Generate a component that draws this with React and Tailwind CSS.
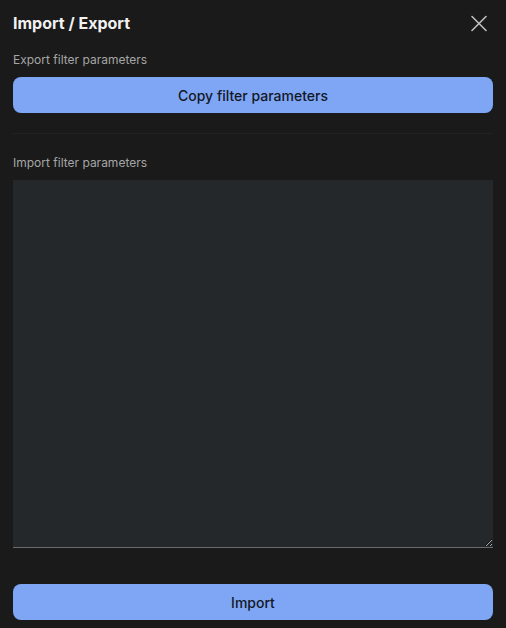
import { X } from 'lucide-react';

export default function App() {
    return (
        <div className="w-[506px] h-[628px] bg-[#1a1a1a] px-[13px] flex flex-col overflow-hidden" style={{ fontFamily: 'Inter, "Noto Sans", sans-serif' }}>
            {/* Header */}
            <div className="flex items-center justify-between h-[24px] mt-[11px]">
                <h2 className="text-[16px] font-bold text-[#f1f1f1] leading-[24px]">Import / Export</h2>
                <button className="text-[#bdbdbd] w-[28px] h-[28px] flex items-center justify-center">
                    <X className="w-[29px] h-[29px]" strokeWidth={1.4} />
                </button>
            </div>

            {/* Export */}
            <label className="mt-[17px] text-[12px] leading-[16px] text-[#a6a6a6]">Export filter parameters</label>
            <button className="mt-[9px] h-[36px] w-full rounded-[8px] bg-[#7fa6f5] text-[14px] font-medium text-[#121826]">
                Copy filter parameters
            </button>

            <div className="mt-[20px] h-px bg-[#222222]" />

            {/* Import */}
            <label className="mt-[21px] text-[12px] leading-[16px] text-[#a6a6a6]">Import filter parameters</label>
            <textarea className="mt-[9px] h-[368px] w-full resize-y bg-[#25282b] border-b border-[#6b6b6b] outline-none text-[#e5e5e5] text-sm p-2" />

            <button className="mt-[36px] h-[36px] w-full rounded-[8px] bg-[#7fa6f5] text-[14px] font-medium text-[#121826]">
                Import
            </button>
        </div>
    );
}
